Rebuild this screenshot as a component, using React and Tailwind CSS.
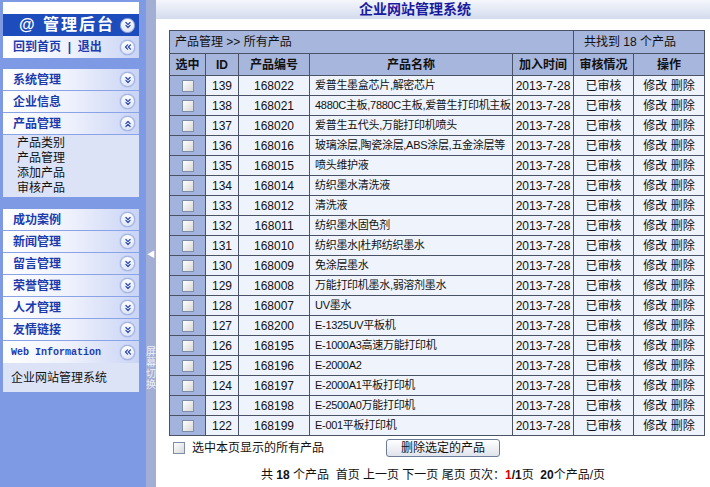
import React from 'react';
import { ChevronsDown, ChevronsUp, ChevronsLeft } from 'lucide-react';

const font = { fontFamily: '"Liberation Sans", "Noto Sans CJK SC", sans-serif' };

const products = [
  [139, '168022', '爱普生墨盒芯片,解密芯片'],
  [138, '168021', '4880C主板,7880C主板,爱普生打印机主板'],
  [137, '168020', '爱普生五代头,万能打印机喷头'],
  [136, '168016', '玻璃涂层,陶瓷涂层,ABS涂层,五金涂层等'],
  [135, '168015', '喷头维护液'],
  [134, '168014', '纺织墨水清洗液'],
  [133, '168012', '清洗液'],
  [132, '168011', '纺织墨水固色剂'],
  [131, '168010', '纺织墨水|杜邦纺织墨水'],
  [130, '168009', '免涂层墨水'],
  [129, '168008', '万能打印机墨水,弱溶剂墨水'],
  [128, '168007', 'UV墨水'],
  [127, '168200', 'E-1325UV平板机'],
  [126, '168195', 'E-1000A3高速万能打印机'],
  [125, '168196', 'E-2000A2'],
  [124, '168197', 'E-2000A1平板打印机'],
  [123, '168198', 'E-2500A0万能打印机'],
  [122, '168199', 'E-001平板打印机'],
];

const Circle = ({ dir = 'down' }) => {
  const Icon = dir === 'up' ? ChevronsUp : dir === 'left' ? ChevronsLeft : ChevronsDown;
  return (
    <span className="w-[15px] h-[15px] shrink-0 rounded-full bg-gradient-to-b from-white to-[#dfe5f7] border border-[#9fb0e0] flex items-center justify-center shadow-[0_0_1px_#5570c0]">
      <Icon size={10} strokeWidth={3} color="#2a48b8" />
    </span>
  );
};

const MenuItem = ({ label, dir = 'down' }) => (
  <div className="h-[22px] flex items-center justify-between pl-[10px] pr-[4px] bg-gradient-to-r from-white via-[#eef1fc] to-[#c9d4f5] border-b border-[#8aa3e6]">
    <span className="text-[12px] font-bold text-[#1c3cae]">{label}</span>
    <Circle dir={dir} />
  </div>
);

const Checkbox = () => (
  <span className="inline-block w-[12px] h-[12px] border border-[#7f8ea8] bg-gradient-to-br from-white to-[#d8d8d8] align-middle" />
);

const Sidebar = () => (
  <div className="w-[146px] shrink-0 bg-[#7e9ae4] pl-[3px] pr-[7px] pt-[2px] min-h-[487px]">
    <div className="h-[12px] bg-white" />
    <div className="h-[22px] bg-[#1d4cbc] flex items-center justify-between pl-[16px] pr-[4px]">
      <span className="text-white font-bold text-[16px] tracking-[2px] whitespace-nowrap">@ 管理后台</span>
      <Circle />
    </div>
    <div className="h-[22px] flex items-center justify-between pl-[10px] pr-[4px] bg-gradient-to-r from-white via-[#eef1fc] to-[#c9d4f5]">
      <span className="text-[12px] font-bold text-[#1c3cae] whitespace-nowrap">回到首页 &nbsp;| &nbsp;退出</span>
      <Circle dir="left" />
    </div>
    <div className="h-[11px]" />
    <MenuItem label="系统管理" />
    <MenuItem label="企业信息" />
    <MenuItem label="产品管理" dir="up" />
    <div className="bg-[#dce3f7] h-[62px] pl-[14px] pt-[1px] flex flex-col text-[12px] leading-[15px] text-[#111]">
      <span>产品类别</span>
      <span>产品管理</span>
      <span>添加产品</span>
      <span>审核产品</span>
    </div>
    <div className="h-[12px]" />
    <MenuItem label="成功案例" />
    <MenuItem label="新闻管理" />
    <MenuItem label="留言管理" />
    <MenuItem label="荣誉管理" />
    <MenuItem label="人才管理" />
    <MenuItem label="友情链接" />
    <div className="h-[22px] flex items-center justify-between pl-[8px] pr-[4px] bg-gradient-to-r from-white via-[#eef1fc] to-[#c9d4f5]">
      <span className="text-[10px] font-bold text-[#1c3cae] whitespace-nowrap" style={{ fontFamily: '"Liberation Mono", monospace' }}>Web Information</span>
      <Circle dir="left" />
    </div>
    <div className="bg-[#dce3f7] h-[29px] pl-[8px] flex items-center text-[12px] text-[#111]">企业网站管理系统</div>
  </div>
);

const Splitter = () => (
  <div className="w-[10px] shrink-0 bg-[#a2aed4] flex flex-col items-center min-h-[487px]">
    <div className="h-[250px]" />
    <span className="text-white text-[8px] leading-[10px]">◀</span>
    <div className="h-[86px]" />
    <div className="flex flex-col text-[10px] leading-[11px] text-[#eef1fa]">
      <span>屏</span>
      <span>幕</span>
      <span>切</span>
      <span>换</span>
    </div>
  </div>
);

const td = 'border border-[#4a5366] h-[20px] p-0';

const App = () => (
  <div className="flex w-[710px] h-[487px] overflow-hidden bg-white text-[12px] text-[#111]" style={font}>
    <Sidebar />
    <Splitter />
    <div className="flex-1 flex flex-col">
      <div className="h-[19px] bg-gradient-to-b from-[#f4f6fb] to-[#d3dcee] flex items-center justify-center">
        <span className="text-[14px] font-bold text-[#1a1aa0] pr-[36px]">企业网站管理系统</span>
      </div>
      <div className="pl-[13px] pt-[11px]">
        <table className="border-collapse border border-[#3b4355] w-[535px] table-fixed text-[12px]">
          <colgroup>
            <col className="w-[36px]" />
            <col className="w-[33px]" />
            <col className="w-[71px]" />
            <col className="w-[203px]" />
            <col className="w-[61px]" />
            <col className="w-[60px]" />
            <col className="w-[71px]" />
          </colgroup>
          <tbody>
            <tr className="bg-[#a7b6dc]">
              <td colSpan={5} className="border border-[#4a5366] h-[23px] pl-[5px]">产品管理 &gt;&gt; 所有产品</td>
              <td colSpan={2} className="border border-[#4a5366] pl-[10px]">共找到 18 个产品</td>
            </tr>
            <tr className="bg-[#a7b6dc] font-bold text-center">
              <td className="border border-[#4a5366] h-[22px]">选中</td>
              <td className="border border-[#4a5366]">ID</td>
              <td className="border border-[#4a5366]">产品编号</td>
              <td className="border border-[#4a5366]">产品名称</td>
              <td className="border border-[#4a5366]">加入时间</td>
              <td className="border border-[#4a5366]">审核情况</td>
              <td className="border border-[#4a5366]">操作</td>
            </tr>
            {products.map(([id, code, name]) => (
              <tr key={id} className="bg-[#eef3fc]">
                <td className={`${td} bg-[#a2b3dd] text-center leading-none`}><Checkbox /></td>
                <td className={`${td} text-center`}>{id}</td>
                <td className={`${td} text-center`}>{code}</td>
                <td className={`${td} pl-[5px] whitespace-nowrap overflow-hidden text-[11px] tracking-[-0.3px]`}>{name}</td>
                <td className={`${td} text-center`}>2013-7-28</td>
                <td className={`${td} text-center`}>已审核</td>
                <td className={`${td} text-center`}>修改 删除</td>
              </tr>
            ))}
          </tbody>
        </table>
        <div className="flex items-center h-[21px] mt-[1px] w-[535px]">
          <div className="w-[217px] flex items-center pl-[4px] gap-[7px]">
            <Checkbox />
            <span>选中本页显示的所有产品</span>
          </div>
          <button className="w-[114px] h-[18px] rounded-[3px] border border-[#6d7c99] bg-gradient-to-b from-white to-[#dfe3ea] text-[12px] leading-none">删除选定的产品</button>
        </div>
      </div>
      <div className="text-center mt-[8px] text-[12px] whitespace-pre">
        共 <b>18</b> 个产品  首页 上一页 下一页 尾页 页次：<b className="text-[#e00000]">1</b><b>/1</b>页  <b>20</b>个产品/页
      </div>
    </div>
  </div>
);

export default App;
